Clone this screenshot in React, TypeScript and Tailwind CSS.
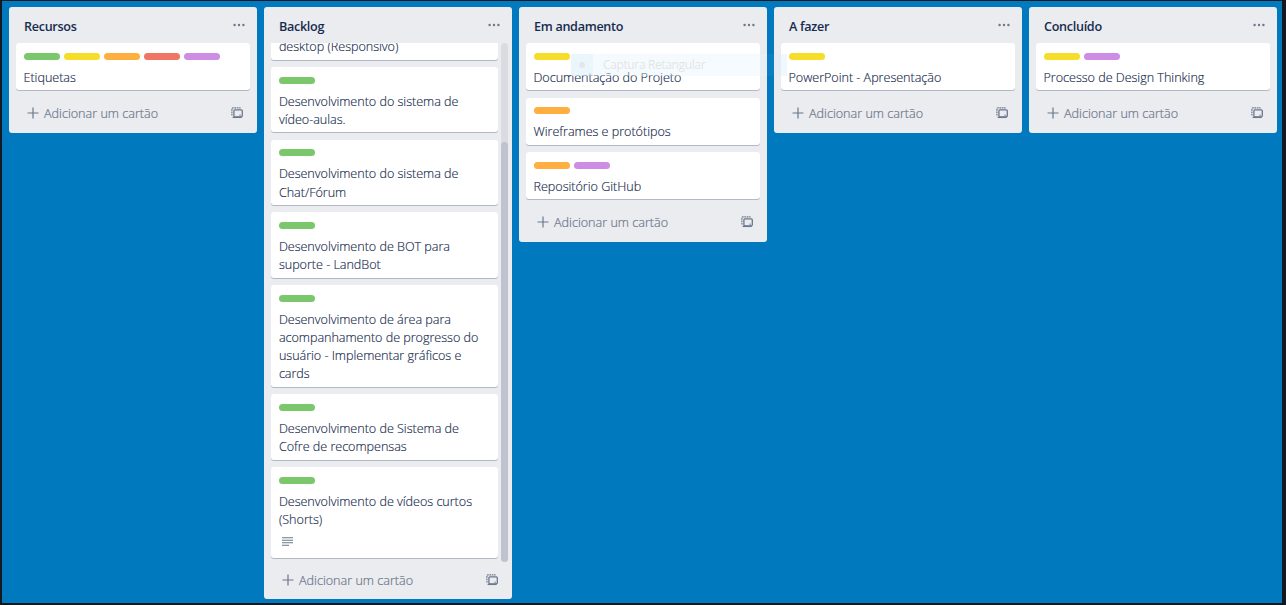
import React from "react";

type Color = "green" | "yellow" | "orange" | "red" | "purple";

const LABEL: Record<Color, string> = {
  green: "bg-[#7bc86c]",
  yellow: "bg-[#f5dd29]",
  orange: "bg-[#ffaf3f]",
  red: "bg-[#ef7564]",
  purple: "bg-[#cd8de5]",
};

interface CardData {
  labels: Color[];
  lines: string[];
  description?: boolean;
}

interface ListData {
  title: string;
  cards: CardData[];
  scroll?: boolean;
}

const LISTS: ListData[] = [
  {
    title: "Recursos",
    cards: [{ labels: ["green", "yellow", "orange", "red", "purple"], lines: ["Etiquetas"] }],
  },
  {
    title: "Backlog",
    scroll: true,
    cards: [
      { labels: [], lines: ["desktop (Responsivo)"] },
      { labels: ["green"], lines: ["Desenvolvimento do sistema de", "vídeo-aulas."] },
      { labels: ["green"], lines: ["Desenvolvimento do sistema de", "Chat/Fórum"] },
      { labels: ["green"], lines: ["Desenvolvimento de BOT para", "suporte - LandBot"] },
      {
        labels: ["green"],
        lines: [
          "Desenvolvimento de área para",
          "acompanhamento de progresso do",
          "usuário - Implementar gráficos e",
          "cards",
        ],
      },
      { labels: ["green"], lines: ["Desenvolvimento de Sistema de", "Cofre de recompensas"] },
      { labels: ["green"], lines: ["Desenvolvimento de vídeos curtos", "(Shorts)"], description: true },
    ],
  },
  {
    title: "Em andamento",
    cards: [
      { labels: ["yellow"], lines: ["Documentação do Projeto"] },
      { labels: ["orange"], lines: ["Wireframes e protótipos"] },
      { labels: ["orange", "purple"], lines: ["Repositório GitHub"] },
    ],
  },
  { title: "A fazer", cards: [{ labels: ["yellow"], lines: ["PowerPoint - Apresentação"] }] },
  {
    title: "Concluído",
    cards: [{ labels: ["yellow", "purple"], lines: ["Processo de Design Thinking"] }],
  },
];

function TemplateIcon() {
  return (
    <svg width="12" height="12" viewBox="0 0 12 12" fill="none" stroke="#6b778c">
      <path d="M.9 8.6V1.9a1 1 0 0 1 1-1H9.6" strokeWidth="1.2" strokeDasharray="1.7 .7" />
      <rect x="2.9" y="2.9" width="8.4" height="6.9" rx="1" strokeWidth="1.3" />
      <path d="M1.6 10.4h9" strokeWidth="1.3" />
      <path d="M8.4 8.2h1.4" strokeWidth="1" />
    </svg>
  );
}

function Card({ card }: { card: CardData }) {
  return (
    <article className="shrink-0 rounded-[3px] bg-white px-[7.5px] pt-[9.7px] pb-[3.2px] shadow-[0_1px_0_#091e4240]">
      <div className="flex gap-1">
        {card.labels.map((c) => (
          <span key={c} className={`h-[7.2px] w-9 rounded-full ${LABEL[c]}`} />
        ))}
      </div>
      <div className="mt-[9px]">
        {card.lines.map((line) => (
          <p key={line} className="h-[18.2px] text-[12.6px] leading-[18.2px] font-light tracking-[-0.03px] whitespace-nowrap text-[#172b4d] [-webkit-text-stroke:0.15px_#172b4d]">
            {line}
          </p>
        ))}
      </div>
      {card.description && (
        <div className="flex h-[25.5px] items-center pl-[3px]">
          <svg width="11" height="9" viewBox="0 0 11 9" stroke="#6b778c" strokeWidth="1.1">
            <path d="M0 .8h11M0 3.3h11M0 5.8h11M0 8.3h7" />
          </svg>
        </div>
      )}
    </article>
  );
}

function List({ list }: { list: ListData }) {
  return (
    <section className="flex w-[248px] shrink-0 flex-col rounded-[3px] bg-[#ebecf0]">
      <header className="flex h-9 shrink-0 items-center justify-between pt-[4px] pr-[12.5px] pl-[15px]">
        <h2 className="text-[12.6px] font-semibold tracking-[-0.3px] text-[#172b4d]">{list.title}</h2>
        <svg width="12" height="4" viewBox="0 0 12 4" fill="#6b778c" className="mb-[4px]">
          <circle cx="1.6" cy="2" r="1.2" />
          <circle cx="6" cy="2" r="1.2" />
          <circle cx="10.4" cy="2" r="1.2" />
        </svg>
      </header>
      {list.scroll ? (
        <div className="flex h-[519px] gap-[3.5px] overflow-hidden pr-[4px] pl-[7.4px]">
          <div className="flex h-[515.8px] min-w-0 flex-1 flex-col justify-end gap-[7.3px] overflow-hidden pb-[1px]">
            {list.cards.map((c, i) => (
              <Card key={i} card={c} />
            ))}
          </div>
          <div className="flex w-[7px] flex-col justify-end rounded-full bg-[#dadce2]">
            <div className="h-[420px] rounded-full bg-[#bfc3ce]" />
          </div>
        </div>
      ) : (
        <div className="flex flex-col gap-[7.3px] px-[7px]">
          {list.cards.map((c, i) => (
            <Card key={i} card={c} />
          ))}
        </div>
      )}
      <footer
        className={`flex items-center pr-[14px] pl-[18px] text-[#6b778c] ${
          list.scroll ? "h-[37px] pt-[1px]" : "h-[42.5px] pt-[5.4px]"
        }`}
      >
        <svg width="12" height="12" viewBox="0 0 12 12" stroke="#6b778c" strokeWidth="1.2" className="mb-[3px]">
          <path d="M6 .5v11M.5 6h11" />
        </svg>
        <span className="ml-[5px] flex-1 text-[12.6px] font-light whitespace-nowrap [-webkit-text-stroke:0.2px_#6b778c]">
          Adicionar um cartão
        </span>
        <span className="mb-[3px]">
          <TemplateIcon />
        </span>
      </footer>
    </section>
  );
}

export default function App() {
  return (
    <main className="relative h-[605px] w-[1286px] overflow-hidden border-t border-r-4 border-b-2 border-l-2 border-[#14191f] bg-[#0079bf] font-['Open_Sans','Noto_Sans',sans-serif]">
      <div className="flex items-start gap-[7px] pt-[6px] pl-[7px]">
        {LISTS.map((l) => (
          <List key={l.title} list={l} />
        ))}
      </div>
      <div className="absolute top-[53px] left-[569px] flex h-[22px] w-[216px] items-center bg-[linear-gradient(90deg,#e6f3fc66_0_196px,#e6f3fc0c_196px_203px,#dcedfa66_203px)]">
        <span className="flex h-full w-[22px] items-center justify-center bg-[#d5eafa]/30">
          <span className="size-[6px] rounded-full bg-[#e5e6e5]" />
        </span>
        <span className="ml-[10px] text-[12px] tracking-[-0.37px] whitespace-nowrap text-[#d9dbda]/70">
          Captura Retangular
        </span>
      </div>
    </main>
  );
}
